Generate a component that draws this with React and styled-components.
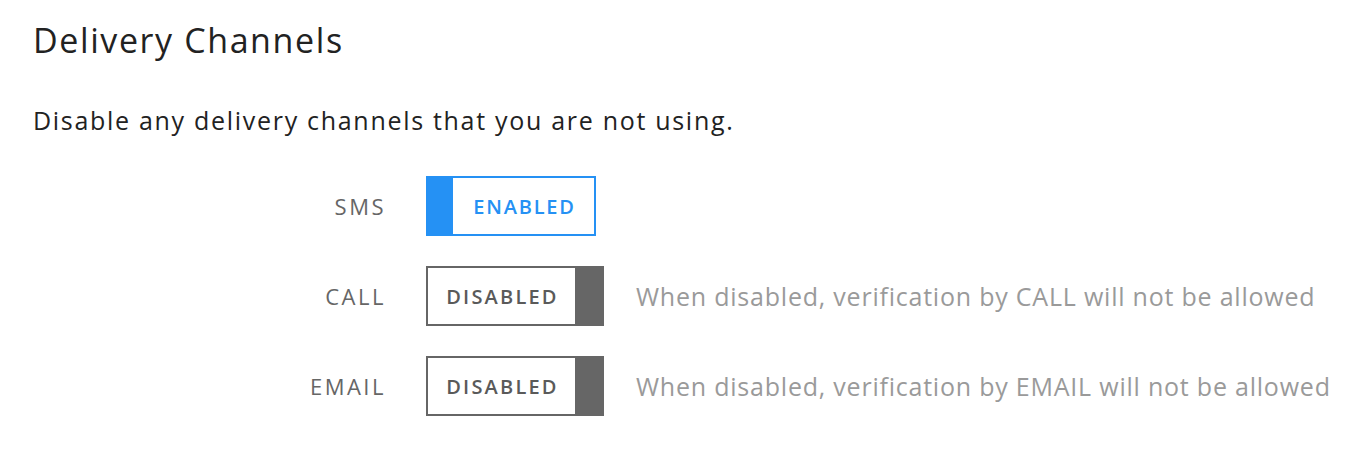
import React from 'react';
import styled, { createGlobalStyle } from 'styled-components';

const channels = [
  { name: 'SMS', enabled: true },
  { name: 'CALL', enabled: false },
  { name: 'EMAIL', enabled: false },
];

const App = () => {
  return (
    <>
      <GlobalStyle />
      <Page>
        <Title>Delivery Channels</Title>
        <Intro>Disable any delivery channels that you are not using.</Intro>
        <ChannelList>
          {channels.map((channel) => (
            <ChannelRow key={channel.name}>
              <ChannelLabel>{channel.name}</ChannelLabel>
              <Toggle enabled={channel.enabled}>
                {channel.enabled && <ToggleKnob enabled />}
                <ToggleText enabled={channel.enabled}>
                  {channel.enabled ? 'ENABLED' : 'DISABLED'}
                </ToggleText>
                {!channel.enabled && <ToggleKnob />}
              </Toggle>
              {!channel.enabled && (
                <HelpText>
                  When disabled, verification by {channel.name} will not be allowed
                </HelpText>
              )}
            </ChannelRow>
          ))}
        </ChannelList>
      </Page>
    </>
  );
};

export default App;

const GlobalStyle = createGlobalStyle`
  body {
    margin: 0;
    background: #fff;
    font-family: "Open Sans", Lato, sans-serif;
  }
`;
const Page = styled.div`
  padding: 16px 33px;
`;
const Title = styled.h1`
  margin: 0;
  font-size: 34px;
  font-weight: 400;
  letter-spacing: 1.6px;
  line-height: 48px;
  color: #222;
`;
const Intro = styled.p`
  margin: 40px 0 0;
  font-size: 25px;
  letter-spacing: 1.7px;
  line-height: 32px;
  color: #222;
`;
const ChannelList = styled.div`
  display: flex;
  flex-direction: column;
  gap: 30px;
  margin-top: 40px;
`;
const ChannelRow = styled.div`
  display: flex;
  align-items: center;
  height: 60px;
`;
const ChannelLabel = styled.div`
  width: 353px;
  text-align: right;
  font-size: 22px;
  letter-spacing: 2.5px;
  color: #666;
  margin-right: 40px;
`;
const Toggle = styled.div`
  display: flex;
  box-sizing: border-box;
  height: 60px;
  width: ${(p) => (p.enabled ? '170px' : '178px')};
  border: 2px solid ${(p) => (p.enabled ? '#2591f4' : '#666')};
`;
const ToggleKnob = styled.div`
  width: ${(p) => (p.enabled ? '25px' : '27px')};
  background: ${(p) => (p.enabled ? '#2591f4' : '#666')};
`;
const ToggleText = styled.div`
  flex: 1;
  display: flex;
  align-items: center;
  justify-content: center;
  padding-left: 2px;
  font-size: 20px;
  font-weight: 600;
  letter-spacing: ${(p) => (p.enabled ? '1.8px' : '2.2px')};
  color: ${(p) => (p.enabled ? '#2591f4' : '#5a5a5a')};
`;
const HelpText = styled.div`
  margin-left: 32px;
  font-size: 25px;
  letter-spacing: 0.78px;
  color: #9a9a9a;
`;
